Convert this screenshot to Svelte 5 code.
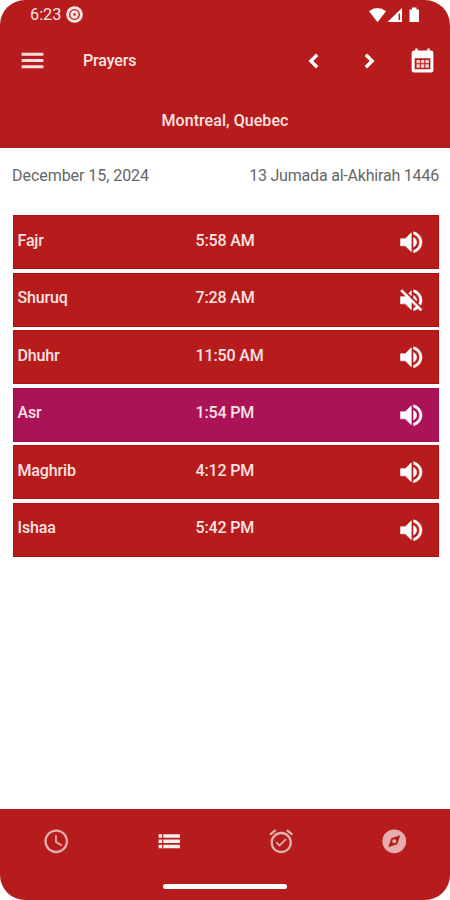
<script lang="ts">
type Prayer = { name: string; time: string; muted?: boolean; current?: boolean };

const prayers: Prayer[] = [
	{ name: 'Fajr', time: '5:58 AM' },
	{ name: 'Shuruq', time: '7:28 AM', muted: true },
	{ name: 'Dhuhr', time: '11:50 AM' },
	{ name: 'Asr', time: '1:54 PM', current: true },
	{ name: 'Maghrib', time: '4:12 PM' },
	{ name: 'Ishaa', time: '5:42 PM' },
];

const soundOn =
	'M3 9v6h4l5 5V4L7 9H3zm13.5 3c0-1.77-1.02-3.29-2.5-4.03v8.05c1.48-.73 2.5-2.25 2.5-4.02zM14 3.23v2.06c2.89.86 5 3.54 5 6.71s-2.11 5.85-5 6.71v2.06c4.01-.91 7-4.49 7-8.77s-2.99-7.86-7-8.77z';
const soundOff =
	'M16.5 12c0-1.77-1.02-3.29-2.5-4.03v2.21l2.45 2.45c.03-.2.05-.41.05-.63zm2.5 0c0 .94-.2 1.82-.54 2.64l1.51 1.51C20.63 14.91 21 13.5 21 12c0-4.28-2.99-7.86-7-8.77v2.06c2.89.86 5 3.54 5 6.71zM4.27 3L3 4.27 7.73 9H3v6h4l5 5v-6.73l4.25 4.25c-.67.52-1.42.93-2.25 1.18v2.06c1.38-.31 2.63-.95 3.69-1.81L19.73 21 21 19.73l-9-9L4.27 3zM12 4L9.91 6.09 12 8.18V4z';
</script>

<div class="screen">
	<div class="status">
		<span class="clock">6:23</span>
		<svg class="target" viewBox="0 0 16 16">
			<circle cx="8" cy="8" r="6.5" />
			<circle cx="8" cy="8" r="2.6" />
		</svg>
		<svg class="signals" viewBox="0 0 54 18">
			<path d="M1 5.2Q9.5-1.3 18 5.2L9.5 16.2z" />
			<path fill-rule="evenodd" d="M19.5 16L34 2v14zM30.6 7.4V14h1.5V7.4z" />
			<path d="M41.5 3.5H44V1.5h4.5v2H51V16h-9.5z" />
		</svg>
	</div>

	<header>
		<svg class="menu" viewBox="0 0 24 24"><path d="M3 18.5h18v-2.6H3v2.6zm0-5.2h18v-2.6H3v2.6zm0-7.8v2.6h18V5.5H3z" /></svg>
		<h1>Prayers</h1>
		<svg class="prev" viewBox="0 0 24 24"><path d="M14.7 6.6L9.3 12l5.4 5.4" /></svg>
		<svg class="next" viewBox="0 0 24 24"><path d="M9.3 6.6l5.4 5.4-5.4 5.4" /></svg>
		<svg class="calendar" viewBox="0 0 24 24">
			<path fill-rule="evenodd" d="M19 3.7h-1V2h-2v1.7H8V2H6v1.7H5a2 2 0 0 0-2 2V20a2 2 0 0 0 2 2h14a2 2 0 0 0 2-2V5.7a2 2 0 0 0-2-2zM5.5 10.2h13v9h-13z" />
			<path d="M7 11.5h2.8v2.7H7zM10.7 11.5h2.8v2.7h-2.8zM14.4 11.5h2.8v2.7h-2.8zM7 15.2h2.8v2.7H7zM10.7 15.2h2.8v2.7h-2.8zM14.4 15.2h2.8v2.7h-2.8z" opacity=".8" />
		</svg>
	</header>

	<div class="location">Montreal, Quebec</div>

	<div class="dates">
		<span class="gregorian">December 15, 2024</span>
		<span class="hijri">13 Jumada al-Akhirah 1446</span>
	</div>

	<main>
		{#each prayers as p (p.name)}
			<div class="prayer" class:current={p.current}>
				<span class="name">{p.name}</span>
				<span class="time">{p.time}</span>
				<svg viewBox="0 0 24 24"><path d={p.muted ? soundOff : soundOn} /></svg>
			</div>
		{/each}
	</main>

	<footer>
		<nav>
			<div class="tab">
				<svg viewBox="0 0 24 24"><path d="M11.99 2C6.47 2 2 6.48 2 12s4.47 10 9.99 10C17.52 22 22 17.52 22 12S17.52 2 11.99 2zM12 20c-4.42 0-8-3.58-8-8s3.58-8 8-8 8 3.58 8 8-3.58 8-8 8zm.5-13H11v6l5.25 3.15.75-1.23-4.5-2.67z" /></svg>
			</div>
			<div class="tab active">
				<svg viewBox="0 0 24 24"><path d="M3 6.2h3v2.8H3zM7 6.2h14v2.8H7zM3 10.6h3v2.8H3zM7 10.6h14v2.8H7zM3 15h3v2.8H3zM7 15h14v2.8H7z" /></svg>
			</div>
			<div class="tab">
				<svg viewBox="0 0 24 24"><path d="M22 5.72l-4.6-3.86-1.29 1.53 4.6 3.86L22 5.72zM7.88 3.39L6.6 1.86 2 5.71l1.29 1.53 4.59-3.85zM12 4c-4.97 0-9 4.03-9 9s4.02 9 9 9c4.97 0 9-4.03 9-9s-4.03-9-9-9zm0 16c-3.87 0-7-3.13-7-7s3.13-7 7-7 7 3.13 7 7-3.13 7-7 7zm-1.46-5.47L8.41 12.4l-1.06 1.06 3.18 3.18 6-6-1.06-1.06-4.93 4.95z" /></svg>
			</div>
			<div class="tab">
				<svg viewBox="0 0 24 24"><path fill-rule="evenodd" d="M12 2a10 10 0 1 0 0 20 10 10 0 1 0 0-20zM17 7l-2.5 7.5L7 17l2.5-7.5zM12 10.3a1.7 1.7 0 1 0 0 3.4 1.7 1.7 0 1 0 0-3.4z" /></svg>
			</div>
		</nav>
		<div class="home-bar"></div>
	</footer>
</div>

<style>
:global(body) {
	background: #fff;
}

.screen {
	box-sizing: border-box;
	width: 450px;
	height: 900px;
	display: flex;
	flex-direction: column;
	overflow: hidden;
	border-radius: 25px;
	background: #fff;
	color: #fbe3e3;
	font-family: Roboto, 'Liberation Sans', sans-serif;
	font-size: 16px;
}

svg {
	display: block;
	flex: none;
	fill: #fff;
}

.status {
	box-sizing: border-box;
	height: 28px;
	padding: 1px 28px 0 30px;
	display: flex;
	align-items: center;
	background: #b71c1c;
}

.clock {
	width: 36px;
	font-size: 16.3px;
	line-height: 27px;
}

.target {
	width: 17px;
	height: 17px;
	fill: none;
	stroke: #fbe3e3;
	stroke-width: 2.7;
}

.signals {
	width: 54px;
	height: 18px;
	margin-left: auto;
}

header {
	box-sizing: border-box;
	height: 64px;
	padding: 1px 13px 0 18px;
	display: flex;
	align-items: center;
	background: #b71c1c;
}

.menu {
	width: 29px;
	height: 29px;
	margin-bottom: 1px;
	fill: #fbdcdc;
}

h1 {
	width: 217px;
	margin: 0 0 0 36px;
	font-size: 16px;
	font-weight: 500;
	line-height: 20px;
	letter-spacing: -0.15px;
}

.prev,
.next {
	width: 28px;
	height: 28px;
	fill: none;
	stroke: #fff;
	stroke-width: 2.9;
}

.next {
	margin-left: 27px;
}

.calendar {
	width: 29px;
	height: 29px;
	margin-left: auto;
}

.location {
	box-sizing: border-box;
	height: 56px;
	border-top: 1px solid #b01a1a;
	background: #b71c1c;
	font-weight: 500;
	line-height: 56px;
	letter-spacing: 0.05px;
	text-align: center;
}

.dates {
	height: 67.3px;
	padding: 0 11px 0 12px;
	display: flex;
	justify-content: space-between;
	color: #666;
	line-height: 55px;
}

.gregorian {
	letter-spacing: -0.05px;
}

.hijri {
	letter-spacing: -0.2px;
}

main {
	flex: 1;
	padding: 0 11.5px 0 12.5px;
	display: flex;
	flex-direction: column;
	gap: 3.5px;
}

.prayer {
	height: 54px;
	display: flex;
	align-items: center;
	background: #b71c1c;
	box-shadow: inset 0 0 0 1px #b01010;
}

.prayer.current {
	background: #aa1457;
	box-shadow: inset 0 0 0 1px #a30a52;
}

.name,
.time {
	padding-bottom: 3px;
	font-weight: 500;
	line-height: 20px;
	letter-spacing: -0.15px;
}

.name {
	width: 178px;
	padding-left: 5px;
}

.prayer svg {
	width: 28.5px;
	height: 28.5px;
	margin: 0 13px 0 auto;
	stroke: #fff;
	stroke-width: 0.5;
}

footer {
	height: 91px;
	background: #b71c1c;
}

nav {
	height: 64px;
	display: flex;
}

.tab {
	flex: 1;
	display: flex;
	justify-content: center;
	align-items: center;
	opacity: 0.64;
}

.tab.active {
	opacity: 0.92;
}

.tab svg {
	width: 28.5px;
	height: 28.5px;
}

.home-bar {
	width: 124px;
	height: 5px;
	margin: 11px auto 0;
	border-radius: 2.5px;
	background: #fff;
}
</style>
